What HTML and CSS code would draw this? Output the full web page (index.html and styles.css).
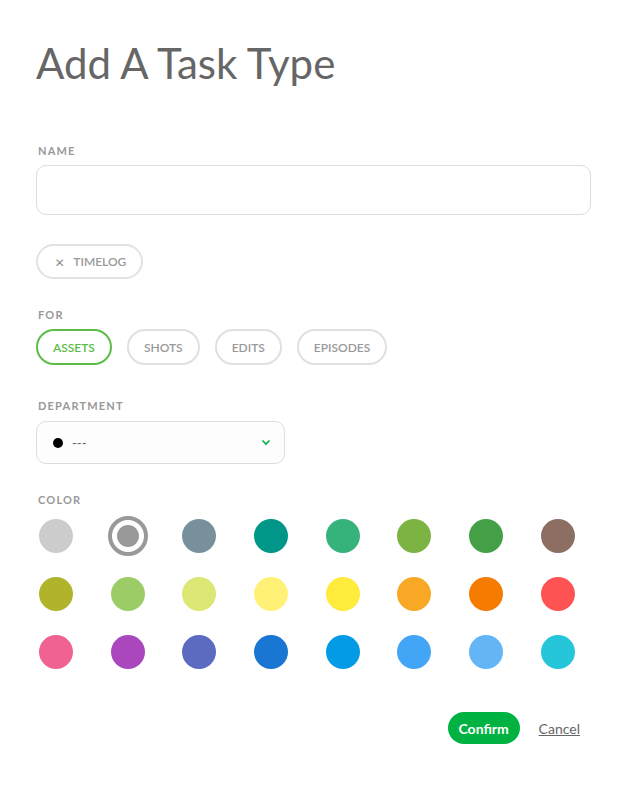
FILE: index.html
```html
<!DOCTYPE html>
<html>
<head>
<meta charset="utf-8">
<link rel="stylesheet" href="styles.css">
</head>
<body>
<div class="modal">
  <h1 class="title">Add A Task Type</h1>

  <div class="label label-name">NAME</div>
  <div class="input"></div>

  <div class="chip-row">
    <span class="chip"><span class="chip-x">×</span>TIMELOG</span>
  </div>

  <div class="label label-for">FOR</div>
  <div class="for-row">
    <span class="pill pill-active">ASSETS</span>
    <span class="pill">SHOTS</span>
    <span class="pill">EDITS</span>
    <span class="pill">EPISODES</span>
  </div>

  <div class="label label-dept">DEPARTMENT</div>
  <div class="select">
    <span class="dot"></span>
    <span class="select-text">---</span>
    <svg class="chevron" width="10" height="7" viewBox="0 0 10 7"><path d="M1.5 1.5 L5 5 L8.5 1.5" fill="none" stroke="#00b242" stroke-width="1.6"/></svg>
  </div>

  <div class="label label-color">COLOR</div>
  <div class="colors">
    <span class="swatch" style="background:#cccccc"></span>
    <span class="swatch-selected"><span class="swatch-inner"></span></span>
    <span class="swatch" style="background:#78909c"></span>
    <span class="swatch" style="background:#009688"></span>
    <span class="swatch" style="background:#35b37a"></span>
    <span class="swatch" style="background:#7cb342"></span>
    <span class="swatch" style="background:#43a047"></span>
    <span class="swatch" style="background:#8d6e63"></span>
    <span class="swatch" style="background:#afb42b"></span>
    <span class="swatch" style="background:#9ccc65"></span>
    <span class="swatch" style="background:#dce775"></span>
    <span class="swatch" style="background:#fff176"></span>
    <span class="swatch" style="background:#ffeb3b"></span>
    <span class="swatch" style="background:#f9a825"></span>
    <span class="swatch" style="background:#f57c00"></span>
    <span class="swatch" style="background:#ff5252"></span>
    <span class="swatch" style="background:#f06292"></span>
    <span class="swatch" style="background:#ab47bc"></span>
    <span class="swatch" style="background:#5c6bc0"></span>
    <span class="swatch" style="background:#1976d2"></span>
    <span class="swatch" style="background:#039be5"></span>
    <span class="swatch" style="background:#42a5f5"></span>
    <span class="swatch" style="background:#64b5f6"></span>
    <span class="swatch" style="background:#26c6da"></span>
  </div>

  <div class="actions">
    <span class="confirm">Confirm</span>
    <span class="cancel">Cancel</span>
  </div>
</div>
</body>
</html>
```

FILE: styles.css
```css
html, body {
  margin: 0;
  padding: 0;
  background: #ffffff;
}
body {
  font-family: Lato, "Open Sans", sans-serif;
  color: #666666;
}
.modal {
  width: 555px;
  padding: 38px 0 0 36px;
  display: flex;
  flex-direction: column;
}
.title {
  margin: 0;
  font-size: 42px;
  font-weight: 400;
  line-height: 50px;
  color: #666666;
}
.label {
  margin-left: 2px;
  font-size: 11px;
  line-height: 13px;
  font-weight: 700;
  letter-spacing: 1.2px;
  color: #999999;
}
.label-name { margin-top: 56px; }
.input {
  margin-top: 8px;
  height: 48px;
  border: 1px solid #dddddd;
  border-radius: 10px;
  background: #ffffff;
}
.chip-row {
  margin-top: 29px;
  display: flex;
}
.chip {
  display: flex;
  align-items: center;
  height: 31px;
  padding: 0 15px 0 17px;
  border: 2px solid #e2e2e2;
  border-radius: 18px;
  font-size: 12px;
  font-weight: 600;
  color: #999999;
}
.chip-x {
  font-size: 16px;
  font-weight: 400;
  margin-right: 9px;
  color: #888888;
}
.label-for { margin-top: 29px; }
.for-row {
  margin-top: 8px;
  display: flex;
  gap: 15px;
}
.pill {
  display: flex;
  align-items: center;
  height: 32px;
  padding: 0 15px;
  border: 2px solid #e0e0e0;
  border-radius: 18px;
  font-size: 12px;
  font-weight: 600;
  color: #999999;
}
.pill-active {
  border-color: #5bbd48;
  color: #5bbd48;
}
.label-dept { margin-top: 34px; }
.select {
  margin-top: 9px;
  height: 41px;
  border: 1px solid #dddddd;
  border-radius: 10px;
  background: #fdfdfd;
  display: flex;
  align-items: center;
  padding: 0 13px 0 16px;
  box-sizing: content-box;
  width: 218px;
}
.dot {
  width: 10px;
  height: 10px;
  border-radius: 50%;
  background: #000000;
}
.select-text {
  margin-left: 9px;
  font-size: 13px;
  color: #666666;
  flex: 1;
}
.chevron { display: block; }
.label-color { margin-top: 29px; }
.colors {
  margin-top: 10px;
  display: grid;
  grid-template-columns: repeat(8, 40px);
  grid-auto-rows: 40px;
  column-gap: 31.7px;
  row-gap: 18px;
}
.swatch {
  width: 34px;
  height: 34px;
  border-radius: 50%;
  justify-self: center;
  align-self: center;
}
.swatch-selected {
  width: 40px;
  height: 40px;
  box-sizing: border-box;
  border: 4px solid #999999;
  border-radius: 50%;
  display: flex;
  align-items: center;
  justify-content: center;
}
.swatch-inner {
  width: 22px;
  height: 22px;
  border-radius: 50%;
  background: #999999;
}
.actions {
  margin-top: 40px;
  display: flex;
  justify-content: flex-end;
  align-items: center;
  padding-right: 11px;
}
.confirm {
  display: flex;
  align-items: center;
  justify-content: center;
  width: 72px;
  height: 32px;
  border-radius: 16px;
  background: #00b242;
  color: #ffffff;
  font-size: 14px;
  font-weight: 700;
  margin-right: 1px;
}
.cancel {
  margin-left: 18px;
  font-size: 14px;
  color: #666666;
  text-decoration: underline;
}
```
